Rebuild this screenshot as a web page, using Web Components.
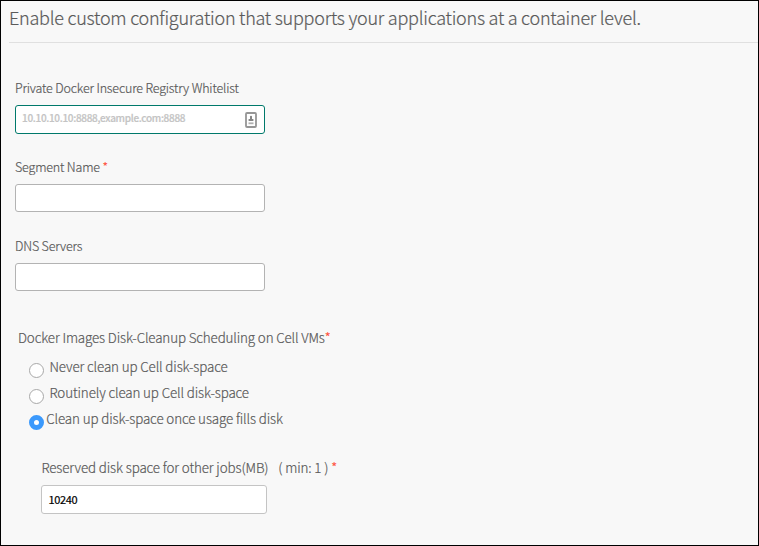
<!DOCTYPE html>
<html lang="en"><head><meta charset="utf-8"><title>Container configuration</title>
<style>
html,body{margin:0;height:100%}
body{font-family:"Noto Sans CJK SC","Noto Sans",sans-serif;font-weight:300;color:#5a5a5a;-webkit-text-stroke:.2px;overflow:hidden}
</style></head><body>
<config-page>
  <page-title slot="title">Enable custom configuration that supports your applications at a container level.</page-title>
  <text-field label="Private Docker Insecure Registry Whitelist" placeholder="10.10.10.10:8888,example.com:8888" active></text-field>
  <text-field label="Segment Name" required></text-field>
  <text-field label="DNS Servers"></text-field>
  <cleanup-group label="Docker Images Disk-Cleanup Scheduling on Cell VMs">
    <radio-option>Never clean up Cell disk-space</radio-option>
    <radio-option>Routinely clean up Cell disk-space</radio-option>
    <radio-option checked>Clean up disk-space once usage fills disk</radio-option>
    <disk-field slot="extra" value="10240" hint="( min: 1 )">Reserved disk space for other jobs(MB)</disk-field>
  </cleanup-group>
</config-page>
<script>
function define(name, markup){
  customElements.define(name, class extends HTMLElement{
    connectedCallback(){
      if(this.shadowRoot) return;
      this.attachShadow({mode:"open"}).innerHTML = markup(this);
    }
  });
}
define("config-page",()=>`<style>
:host{display:block;box-sizing:border-box;width:759px;height:546px;border:1px solid #000;background:#f8f8f8}
main{display:flex;flex-direction:column;padding:35px 0 0 14px;gap:23px}
</style><slot name="title"></slot><main><slot></slot></main>`);
define("page-title",()=>`<style>
:host{display:block;margin-left:8px;height:41px;border-bottom:1px solid #e0e0e0;font-size:18px;letter-spacing:-.24px;line-height:32px;white-space:nowrap}
</style><span><slot></slot></span>`);
define("text-field",e=>`<style>
:host{display:block;width:250px;height:56px}
label{display:block;font-size:12.5px;letter-spacing:-.17px;line-height:20px;height:20px;margin-bottom:7px;white-space:nowrap}
b{color:#ff4a35;font-weight:300}
div{box-sizing:border-box;display:flex;align-items:center;justify-content:space-between;height:28px;padding:0 7px 0 6px;border:1px solid #b3b3b3;border-radius:3px;background:#fff}
:host([active]) div{border-color:#00796b;height:29px}
.ph{color:#c4c4c4;font-size:10px;letter-spacing:-.3px;font-weight:500;line-height:24px;height:27px}
</style><label><span>${e.getAttribute("label")}</span>${e.hasAttribute("required")?" <b>*</b>":""}</label>
<div>${e.hasAttribute("active")?`<span class="ph">${e.getAttribute("placeholder")}</span>
<svg width="12" height="16" viewBox="0 0 12 16"><rect x="1" y="1" width="10" height="14" rx="1" fill="#fff" stroke="#969696" stroke-width="1.8"/><circle cx="6" cy="4.8" r="1.1" fill="#858585"/><path d="M5 5h2v2h1.4v2H3.6V7H5z" fill="#858585"/><path d="M3.5 11.3h5" stroke="#b0b0b0" stroke-width="1.8"/></svg>`:""}</div>`);
define("cleanup-group",e=>`<style>
:host{display:block;margin:12px 0 0 3px;letter-spacing:-.127px;font-size:13.4px}
.label{line-height:20px;height:20px;white-space:nowrap}
.label span{letter-spacing:-.14px}
b{color:#ff4a35;font-weight:300}
.options{display:flex;flex-direction:column;margin:9px 0 0 10px}
</style><div class="label"><span>${e.getAttribute("label")}</span><b>*</b></div><div class="options"><slot></slot></div><slot name="extra"></slot>`);
define("radio-option",()=>`<style>
:host{display:flex;height:26px;line-height:20px;white-space:nowrap}
i{box-sizing:border-box;width:15px;height:15px;border:1px solid #a8a8a8;border-radius:50%;background:#fff;margin:7px 5.7px 0 .8px;flex:none}
:host([checked]) i{border:5px solid #3b99fc;margin-right:2.5px}
</style><i></i><span><slot></slot></span>`);
define("disk-field",e=>`<style>
:host{display:block;margin:23px 0 0 23.4px;white-space:nowrap}
.label{line-height:20px;height:20px}
b{color:#ff4a35;font-weight:300}
.hint{margin-left:9.8px}
.box{box-sizing:border-box;width:226px;height:29px;padding-left:6px;margin-top:8px;border:1px solid #c4c4c4;border-radius:3px;background:#fff;color:#000;font-size:11px;letter-spacing:-.3px;font-weight:400;line-height:26px}
</style><div class="label"><span><slot></slot></span><span class="hint">${e.getAttribute("hint")}</span> <b>*</b></div><div class="box"><span>${e.getAttribute("value")}</span></div>`);
</script></body></html>
